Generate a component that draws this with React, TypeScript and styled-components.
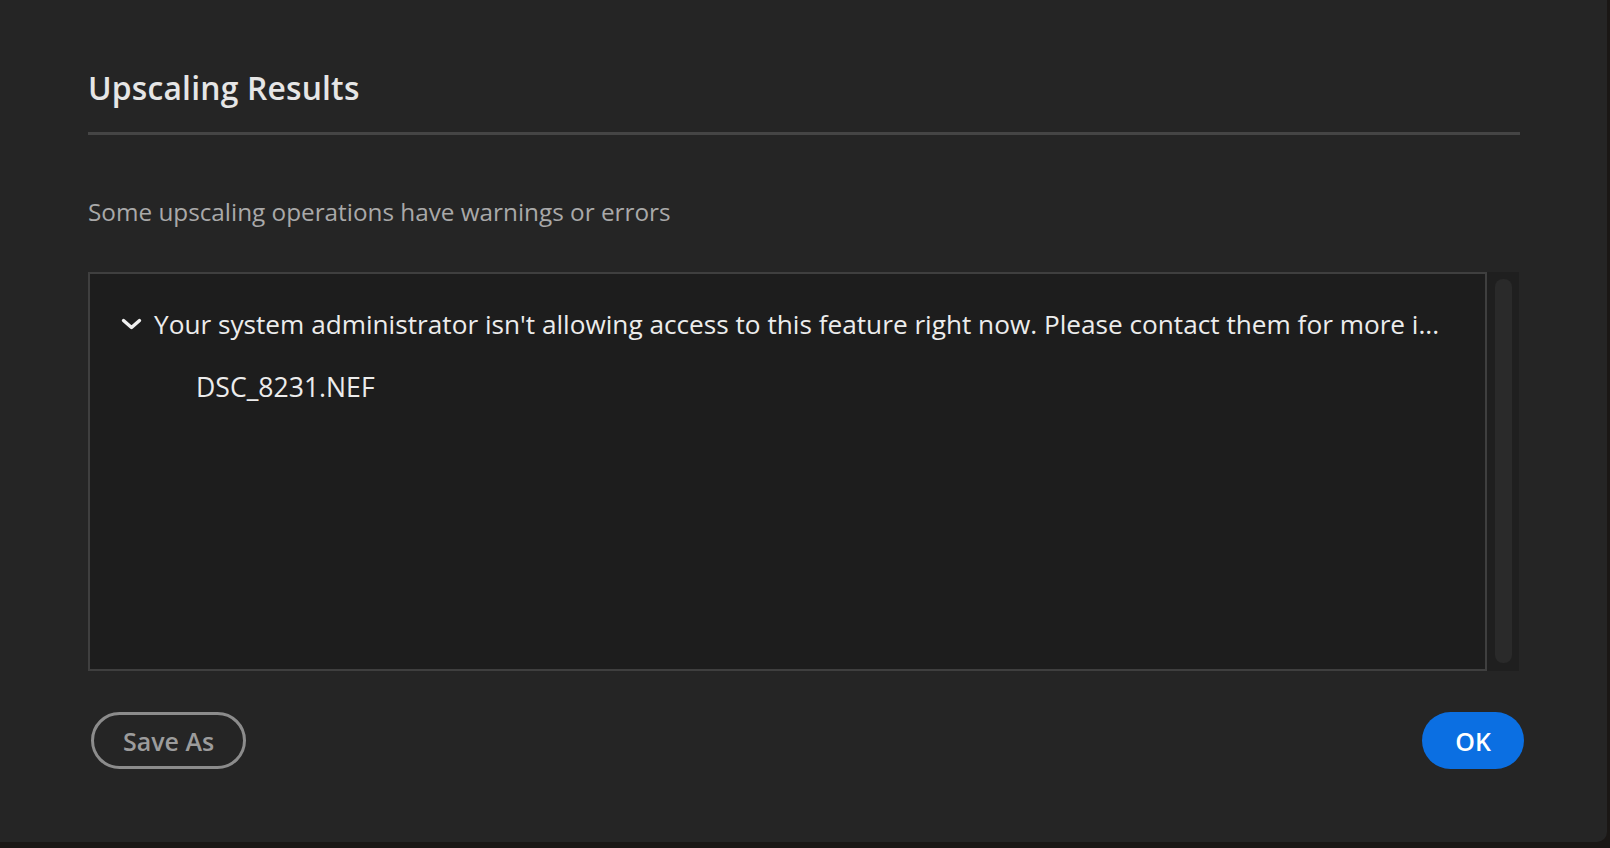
import React from 'react'
import styled, { createGlobalStyle } from 'styled-components'

const GlobalStyle = createGlobalStyle`
  html, body {
    margin: 0;
    padding: 0;
    background: #1a1715;
  }
  body {
    font-family: "Open Sans", "Noto Sans", sans-serif;
    -webkit-font-smoothing: antialiased;
  }
`

const Dialog = styled.div`
  width: 1607px;
  height: 842px;
  box-sizing: border-box;
  background: #252525;
  border-bottom-right-radius: 10px;
  padding: 66px 87px 0 88px;
  display: flex;
  flex-direction: column;
`

const Title = styled.h1`
  margin: 0;
  font-size: 31.8px;
  line-height: 44px;
  font-weight: 600;
  color: #e6e6e6;
  letter-spacing: 0.2px;
`

const Divider = styled.hr`
  margin: 22px 0 0;
  border: none;
  height: 3px;
  background: #454545;
`

const Subtitle = styled.p`
  margin: 62px 0 0;
  font-size: 24.3px;
  line-height: 30px;
  color: #a9a9a9;
`

const ListArea = styled.div`
  margin-top: 45px;
  display: grid;
  grid-template-columns: 1399px 32px;
  height: 399px;
`

const ListBox = styled.div`
  box-sizing: border-box;
  border: 2px solid #3f3f3f;
  background: #1d1d1d;
  padding: 34px 0 0 31px;
  display: flex;
  flex-direction: column;
  gap: 31px;
`

const Row = styled.div<{ $indent?: boolean }>`
  display: flex;
  align-items: center;
  gap: 12px;
  padding-left: ${p => (p.$indent ? '75px' : '0')};
  font-size: ${p => (p.$indent ? '26.6px' : '26.2px')};
  line-height: 32px;
  color: #ececec;
  white-space: nowrap;
`

const Track = styled.div`
  background: #1f1f1f;
  padding: 7px 7px 8px 8px;
  display: flex;
`

const Thumb = styled.div`
  flex: 1;
  background: #2a2a2a;
  border-radius: 8px;
`

const Footer = styled.div`
  margin-top: 41px;
  display: flex;
  justify-content: space-between;
  align-items: center;
  padding: 0 0 0 3px;
  margin-right: -4px;
`

const Button = styled.button<{ $primary?: boolean }>`
  height: 57px;
  box-sizing: border-box;
  border-radius: 29px;
  font-family: "Open Sans", "Noto Sans", sans-serif;
  font-size: 25px;
  font-weight: 600;
  padding: 0 ${p => (p.$primary ? '33px' : '29px')};
  border: ${p => (p.$primary ? 'none' : '3px solid #8c8c8c')};
  background: ${p => (p.$primary ? '#0b6fe2' : 'transparent')};
  color: ${p => (p.$primary ? '#ffffff' : '#9c9c9c')};
  cursor: pointer;
`

const Chevron = () => (
  <svg width="21" height="12" viewBox="0 0 21 12" fill="none">
    <path d="M2.5 2.5 L10.5 9.5 L18.5 2.5" stroke="#f0f0f0" strokeWidth="3.4" strokeLinecap="round" strokeLinejoin="round" />
  </svg>
)

export default function App() {
  return (
    <>
      <GlobalStyle />
      <Dialog>
        <Title>Upscaling Results</Title>
        <Divider />
        <Subtitle>Some upscaling operations have warnings or errors</Subtitle>
        <ListArea>
          <ListBox>
            <Row>
              <Chevron />
              <span>Your system administrator isn't allowing access to this feature right now. Please contact them for more i...</span>
            </Row>
            <Row $indent>DSC_8231.NEF</Row>
          </ListBox>
          <Track>
            <Thumb />
          </Track>
        </ListArea>
        <Footer>
          <Button>Save As</Button>
          <Button $primary>OK</Button>
        </Footer>
      </Dialog>
    </>
  )
}
